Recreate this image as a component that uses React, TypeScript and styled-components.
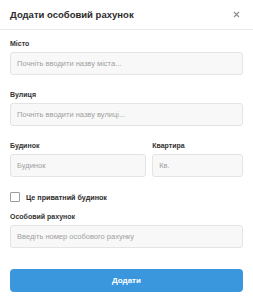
import React, { FC } from 'react';
import styled, { createGlobalStyle } from 'styled-components';

const GlobalStyle = createGlobalStyle`
  html, body {
    margin: 0;
    padding: 0;
    background: #ffffff;
  }
  body {
    font-family: 'Liberation Sans', Arial, sans-serif;
  }
`;

const Modal = styled.div`
  width: 253px;
  height: 300px;
  background: #ffffff;
  box-sizing: border-box;
`;

const Header = styled.div`
  height: 30px;
  box-sizing: border-box;
  display: flex;
  align-items: center;
  justify-content: space-between;
  padding: 0 10px 1px 10px;
  border-bottom: 1px solid #e9e9e9;
`;

const Title = styled.h2`
  margin: 0;
  font-size: 9.5px;
  font-weight: bold;
  color: #2b2b2b;
`;

const CloseButton = styled.button`
  border: none;
  background: none;
  padding: 0;
  margin-right: 2px;
  width: 10px;
  height: 10px;
  display: flex;
  align-items: center;
  justify-content: center;
  cursor: pointer;
`;

const Body = styled.form`
  padding: 9px 10px 0 10px;
  display: flex;
  flex-direction: column;
`;

const Field = styled.div<{ $gap?: number; $grow?: number }>`
  display: flex;
  flex-direction: column;
  gap: 3px;
  margin-bottom: ${(p) => p.$gap ?? 15}px;
  flex: ${(p) => p.$grow ?? 1};
  min-width: 0;
`;

const Row = styled.div`
  display: flex;
  gap: 6px;
`;

const Label = styled.label`
  font-size: 7px;
  line-height: 10px;
  font-weight: bold;
  color: #333333;
`;

const Input = styled.input`
  height: 23px;
  box-sizing: border-box;
  width: 100%;
  border: 1px solid #e4e4e4;
  border-radius: 3px;
  background: #f8f8f8;
  padding: 0 6px;
  font-family: inherit;
  font-size: 7.5px;
  color: #333;
  outline: none;

  &::placeholder {
    color: #a0a0a0;
  }
`;

const CheckRow = styled.label`
  display: flex;
  align-items: center;
  gap: 6px;
  margin-bottom: 10px;
  font-size: 7.2px;
  font-weight: bold;
  color: #2b2b2b;
`;

const Box = styled.span`
  width: 10px;
  height: 10px;
  box-sizing: border-box;
  border: 1px solid #9d9d9d;
  border-radius: 1px;
  background: #fff;
`;

const SubmitButton = styled.button`
  height: 23px;
  width: 100%;
  border: none;
  border-radius: 4px;
  background: #3a97dd;
  color: #ffffff;
  font-family: inherit;
  font-size: 8px;
  font-weight: bold;
  cursor: pointer;
`;

const App: FC = () => {
  return (
    <>
      <GlobalStyle />
      <Modal>
        <Header>
          <Title>Додати особовий рахунок</Title>
          <CloseButton type="button" aria-label="Закрити">
            <svg width="7" height="7" viewBox="0 0 7 7">
              <path d="M1 1L6 6M6 1L1 6" stroke="#8c8c8c" strokeWidth="1.1" />
            </svg>
          </CloseButton>
        </Header>
        <Body onSubmit={(e) => e.preventDefault()}>
          <Field>
            <Label>Місто</Label>
            <Input placeholder="Почніть вводити назву міста..." />
          </Field>
          <Field>
            <Label>Вулиця</Label>
            <Input placeholder="Почніть вводити назву вулиці..." />
          </Field>
          <Row>
            <Field $grow={1.5}>
              <Label>Будинок</Label>
              <Input placeholder="Будинок" />
            </Field>
            <Field>
              <Label>Квартира</Label>
              <Input placeholder="Кв." />
            </Field>
          </Row>
          <CheckRow>
            <Box />
            Це приватний будинок
          </CheckRow>
          <Field $gap={21}>
            <Label>Особовий рахунок</Label>
            <Input placeholder="Введіть номер особового рахунку" />
          </Field>
          <SubmitButton type="submit">Додати</SubmitButton>
        </Body>
      </Modal>
    </>
  );
};

export default App;
